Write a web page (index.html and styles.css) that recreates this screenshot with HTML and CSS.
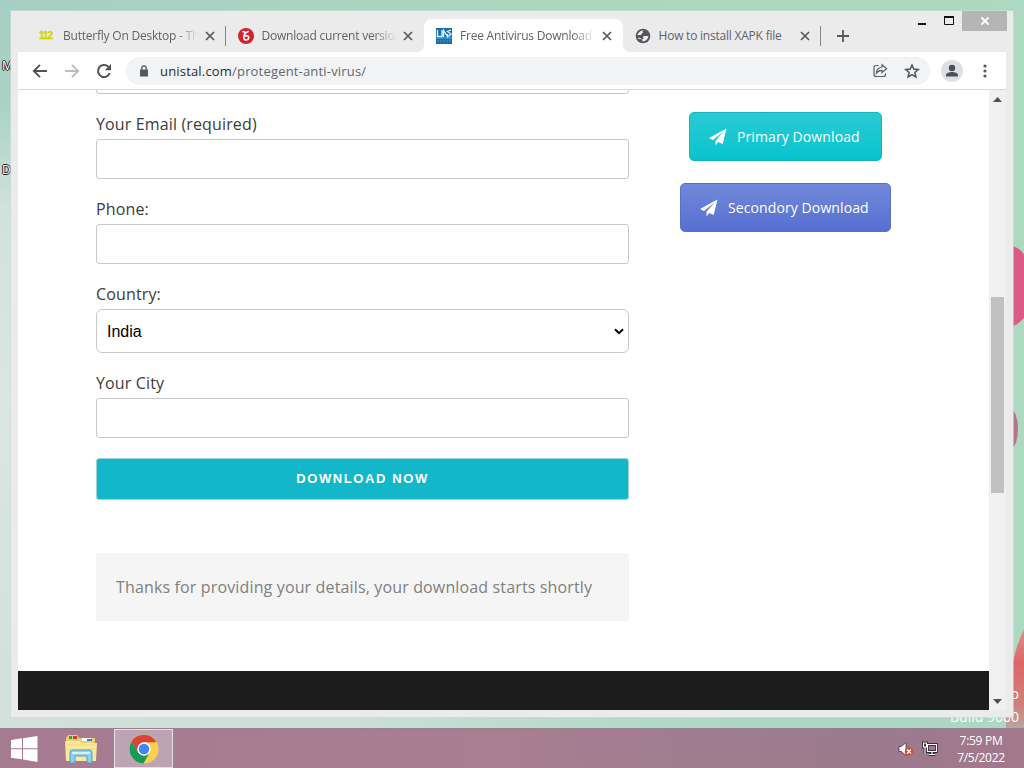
FILE: index.html
```html
<!DOCTYPE html>
<html lang="en">
<head>
  <meta charset="UTF-8" />
  <meta name="viewport" content="width=device-width, initial-scale=1.0"/>
  <title>Free Antivirus Download</title>
  <link rel="stylesheet" href="styles.css">
</head>
<body>
  <div class="desktop">
    <span class="petal petal-top"></span>
    <span class="petal petal-mid"></span>
    <span class="petal petal-bottom"></span>
    <span class="shortcut shortcut-m">M</span>
    <span class="shortcut shortcut-d">D</span>
    <span class="watermark watermark-name">Windows 8.1 Pro</span>
    <span class="watermark watermark-build">Build 9600</span>

    <div class="window">
      <div class="window-buttons">
        <svg class="win-min" width="10" height="16" viewBox="0 0 10 16"><path d="M1 13h8" stroke="#111" stroke-width="2"/></svg>
        <svg class="win-max" width="12" height="16" viewBox="0 0 12 16"><path d="M1.500 6.500h9v7h-9z" fill="none" stroke="#111"/><path d="M1 6h10" stroke="#111" stroke-width="2"/></svg>
        <div class="win-close">
          <svg width="10" height="10" viewBox="0 0 10 10"><path d="M1.500 1.500l7 7M8.500 1.500l-7 7" stroke="#fff" stroke-width="1.800"/></svg>
        </div>
      </div>

      <div class="tabs">
        <div class="tab">
          <span class="favicon favicon-112">112</span>
          <span class="tab-title fade">Butterfly On Desktop - Th</span>
          <svg class="tab-close" width="10" height="10" viewBox="0 0 10 10"><path d="M1 1l8 8M9 1l-8 8"/></svg>
        </div>
        <div class="tab">
          <svg class="favicon" width="16" height="16" viewBox="0 0 16 16"><circle cx="8" cy="8" r="8" fill="#d2232f"/><path d="M4.500 3.500c2 0 2.800.8 2.600 2.200M10.800 3.300C8 4 6 6.500 5.800 9.300c-.2 3.600 4.900 3.600 4.900.3 0-2.200-2.600-2.600-3.300-1" fill="none" stroke="#fff" stroke-width="1.600"/></svg>
          <span class="tab-title fade">Download current version</span>
          <svg class="tab-close" width="10" height="10" viewBox="0 0 10 10"><path d="M1 1l8 8M9 1l-8 8"/></svg>
        </div>
        <div class="tab active">
          <svg class="favicon" width="16" height="16" viewBox="0 0 16 16"><path d="M0 0h16v16H0z" fill="#1271ae"/><path d="M1.500 2v6.500H6V2M7.500 9V2.500l4 6V6M15 2l-3.500 1.500L15 6l-2.500 2.500" fill="none" stroke="#e4f4fc" stroke-width="1.300"/><path d="M0 10h16" stroke="#8fc4e2" stroke-width=".7"/><path d="M1 13h14" stroke="#4a95c5" stroke-dasharray="2 1"/></svg>
          <span class="tab-title fade">Free Antivirus Download</span>
          <svg class="tab-close" width="10" height="10" viewBox="0 0 10 10"><path d="M1 1l8 8M9 1l-8 8"/></svg>
        </div>
        <div class="tab">
          <svg class="favicon" width="16" height="16" viewBox="0 0 16 16"><circle cx="8" cy="8" r="7.300" fill="#54575b"/><path d="M9 2.200c-1.600.4-1.900 1.700-.8 2.400-1.700.4-1 2-2.400 2.300-1.200.3-2.200-.2-3.300.5C2.800 4.800 5.400 2.300 9 2.200zM2.600 10c1.400-.5 2.900-.2 3.600.8.600 1 1.800.5 2.500-.2-.9-.8-.9-2 .3-2.500 1.500-.5 2.500.2 4.400-.1-.4 3.200-2.700 5.400-5.700 5.400-.6-.7.200-1.400-.7-1.900-1.400-.7-3.100.1-4.400-1.500z" fill="#eceded"/></svg>
          <span class="tab-title">How to install XAPK file</span>
          <svg class="tab-close" width="10" height="10" viewBox="0 0 10 10"><path d="M1 1l8 8M9 1l-8 8"/></svg>
        </div>
        <svg class="new-tab" width="12" height="12" viewBox="0 0 12 12"><path d="M6 0v12M0 6h12" stroke="#54575b" stroke-width="1.800"/></svg>
      </div>

      <div class="toolbar">
        <svg class="nav" width="16" height="16" viewBox="0 0 16 16"><path d="M15 8H2M8 1.800L1.800 8 8 14.200" fill="none" stroke="#505356" stroke-width="1.900"/></svg>
        <svg class="nav" width="16" height="16" viewBox="0 0 16 16"><path d="M1 8h13M8 1.800L14.200 8 8 14.200" fill="none" stroke="#babcbe" stroke-width="1.900"/></svg>
        <svg class="nav" width="16" height="16" viewBox="0 0 16 16"><path d="M13.700 10A6 6 0 1 1 12.300 3.800" fill="none" stroke="#505356" stroke-width="2"/><path d="M15 1v6.200H8.800z" fill="#505356"/></svg>
        <div class="omnibox">
          <svg class="lock" width="10" height="12" viewBox="0 0 10 12"><path d="M1 4.500h8v7H1z" fill="#55585c"/><path d="M2.800 5V3a2.200 2.200 0 0 1 4.400 0v2" fill="none" stroke="#55585c" stroke-width="1.300"/></svg>
          <span class="url">unistal.com<span class="path">/protegent-anti-virus/</span></span>
          <svg class="share" width="16" height="16" viewBox="0 0 16 16"><path d="M6.500 2.500H4A2 2 0 0 0 2 4.500v7a2 2 0 0 0 2 2h7.500a2 2 0 0 0 2-2V10.500" fill="none" stroke="#5a5d61" stroke-width="1.200"/><path d="M10 1.800L14.700 5.800 10 9.500V7.300C7.500 7.200 5.800 8.200 4.500 10.200 4.700 6.800 6.500 4.400 10 4z" fill="none" stroke="#5a5d61" stroke-width="1.200"/></svg>
          <svg width="16" height="16" viewBox="0 0 16 16"><path d="M8 2l1.800 4.100 4.500.4-3.400 3 1 4.400L8 11.600l-3.900 2.300 1-4.400-3.400-3 4.500-.4z" fill="none" stroke="#505356" stroke-width="1.500"/></svg>
        </div>
        <svg class="avatar" width="22" height="22" viewBox="0 0 22 22"><circle cx="11" cy="11" r="11" fill="#dcdfe6"/><circle cx="11" cy="8" r="3.200" fill="#4b4f59"/><path d="M5 16.500v-1.500c0-2 3.500-3 6-3s6 1 6 3v1.500z" fill="#4b4f59"/></svg>
        <svg width="4" height="14" viewBox="0 0 4 14"><g fill="#54575b"><circle cx="2" cy="2" r="1.600"/><circle cx="2" cy="7" r="1.600"/><circle cx="2" cy="12" r="1.600"/></g></svg>
      </div>

      <div class="viewport">
        <div class="page">
          <div class="content">
            <form class="form">
              <input class="field" type="text">
              <label class="label">Your Email (required)</label>
              <input class="field" type="text">
              <label class="label">Phone:</label>
              <input class="field" type="text">
              <label class="label">Country:</label>
              <div class="field select">
                <span>India</span>
                <svg width="10" height="7" viewBox="0 0 10 7"><path d="M1 1.200l4 4 4-4" fill="none" stroke="#000" stroke-width="2"/></svg>
              </div>
              <label class="label">Your City</label>
              <input class="field" type="text">
              <button class="submit" type="button">DOWNLOAD NOW</button>
              <div class="thanks">Thanks for providing your details, your download starts shortly</div>
            </form>
            <div class="downloads">
              <a class="btn primary">
                <svg width="18" height="18" viewBox="0 0 18 18"><path d="M17.500.5L0 10l4 1.900L14.500 3.500 6.500 12.800v4.700l2.600-3.400 4.600 2z" fill="#fff"/></svg>
                <span>Primary Download</span>
              </a>
              <a class="btn secondary">
                <svg width="18" height="18" viewBox="0 0 18 18"><path d="M17.500.5L0 10l4 1.900L14.500 3.500 6.500 12.800v4.700l2.600-3.400 4.600 2z" fill="#fff"/></svg>
                <span>Secondory Download</span>
              </a>
            </div>
          </div>
          <div class="footer"></div>
        </div>
        <div class="scrollbar">
          <svg width="9" height="5" viewBox="0 0 9 5"><path d="M0 5l4.500-5L9 5z" fill="#505050"/></svg>
          <div class="thumb"></div>
          <svg class="down" width="9" height="5" viewBox="0 0 9 5"><path d="M0 0l4.500 5L9 0z" fill="#505050"/></svg>
        </div>
      </div>
    </div>

    <div class="taskbar">
      <svg class="start" width="28" height="26" viewBox="0 0 28 26"><path d="M1 4l11-1.700v10H1zM13 2.200L27.500 0v12.300H13zM1 13.300h11v10L1 21.700zM13 13.300h14.500V26L13 23.500z" fill="#fff"/></svg>
      <svg class="explorer" width="32" height="30" viewBox="0 0 32 30">
        <path d="M1 4l2-3h9l2 3h16v23H1z" fill="#e9cf73"/>
        <path d="M4 2h3v3H4zM21 4h3v3h-3z" fill="#3f9b47"/><path d="M8 2h4v3H8z" fill="#c6472e"/><path d="M17 4h9v3h-9z" fill="#fff"/><path d="M22 5h5v2h-5z" fill="#3784c4"/>
        <path d="M0 7h15l2 2h15l-1 18H1z" fill="#f9e89d"/>
        <path d="M2 11h28M2 15h28" stroke="#f1d779"/>
        <path d="M5 29V18q0-2 3-2h16q3 0 3 2v11h-5v-7H10v7z" fill="#91cdec" stroke="#4fa0cf"/>
        <path d="M7 19h18" stroke="#d3f0fb" stroke-width="2"/>
      </svg>
      <div class="task-active">
        <svg width="30" height="30" viewBox="0 0 30 30">
          <circle cx="15" cy="15" r="14.500" fill="#fcd04b"/>
          <path d="M2.440 7.750A14.500 14.500 0 0 1 27.560 8.300H15L9.200 18.350z" fill="#da4437"/>
          <path d="M2.440 7.750A14.500 14.500 0 0 0 14.500 29.500L20.800 18.350 15 21.700 9.200 18.350z" fill="#159a5a"/>
          <circle cx="15" cy="15" r="6.700" fill="#fff"/><circle cx="15" cy="15" r="5.300" fill="#4285f4"/>
        </svg>
      </div>
      <div class="tray">
        <svg width="16" height="16" viewBox="0 0 16 16"><path d="M1 5.500h2.500L8 1.500v13l-4.500-4H1z" fill="#fff" stroke="#4b3345" stroke-width=".8"/><circle cx="11" cy="10.500" r="4.200" fill="#d9472f"/><path d="M9 8.500l4 4M13 8.500l-4 4" stroke="#fff" stroke-width="1.400"/></svg>
        <svg class="network" width="16" height="16" viewBox="0 0 16 16"><g fill="none" stroke="#3d2e3b" stroke-width="3"><path d="M5.500 3.500h9v7h-9zM10 11v2.500M6.500 13.500h7M1.500 2h3v4h-3zM3 6v7"/></g><g fill="none" stroke="#fff" stroke-width="1.100"><path d="M5.500 3.500h9v7h-9zM10 11v2.500M6.500 13.500h7M1.500 2h3v4h-3zM3 6v7"/></g></svg>
        <div class="clock">
          <span>7:59 PM</span>
          <span>7/5/2022</span>
        </div>
      </div>
    </div>
  </div>
</body>
</html>
```

FILE: styles.css
```css
* {
  box-sizing: border-box;
}

body {
  margin: 0;
  font-family: 'Open Sans', 'Noto Sans', sans-serif;
}

svg {
  display: block;
  flex: none;
}

.desktop {
  position: relative;
  width: 1024px;
  height: 768px;
  overflow: hidden;
  display: flex;
  flex-direction: column;
  justify-content: flex-end;
  background:
    linear-gradient(to right, #d3e0da 0, #cbdfd6 350px, rgba(171, 216, 196, 0) 750px) 0 700px / 100% 68px no-repeat,
    linear-gradient(to bottom, #a6cfc3 0, #a9d1c4 100px, #d0e2dc 210px, #dce5e2 400px, #cfdfd8 100%) 0 0 / 12px 100% no-repeat,
    linear-gradient(to right, #a6cfc3, #aad7c0 50%, #add8c2);
}

/* wallpaper */
.petal {
  position: absolute;
  background: #dc5a88;
}

.petal-top {
  left: 980px;
  top: 245px;
  width: 54px;
  height: 82px;
  border-radius: 50%;
}

.petal-mid {
  left: 1004px;
  top: 410px;
  width: 14px;
  height: 38px;
  border-radius: 50%;
  background: #b6738e;
}

.petal-bottom {
  left: 1006px;
  top: 610px;
  width: 40px;
  height: 118px;
  border-radius: 100% 0 0 0;
  background: linear-gradient(#d8a7a0, #dc6767 45%, #cf7f7d 80%, #bda39d);
}

.shortcut {
  position: absolute;
  left: 2px;
  font-size: 12px;
  line-height: 16px;
  color: #fff;
  text-shadow: 1px 0 #222, -1px 0 #222, 0 1px #222, 0 -1px #222;
}

.shortcut-m {
  top: 58px;
}

.shortcut-d {
  top: 162px;
}

.watermark {
  position: absolute;
  right: 5px;
  font-size: 14px;
  line-height: 18px;
  color: #fff;
  white-space: nowrap;
}

.watermark-name {
  top: 685px;
}

.watermark-build {
  top: 708px;
}

/* browser window */
.window {
  position: absolute;
  left: 11px;
  top: 11px;
  width: 1002px;
  height: 706px;
  padding: 0 7px 7px;
  display: flex;
  flex-direction: column;
  background: #ebebeb;
  box-shadow: 0 0 0 1px rgba(205, 222, 215, 0.6);
}

.window-buttons {
  position: absolute;
  top: 0;
  right: 6px;
  display: flex;
}

.win-min {
  margin-right: 16px;
}

.win-max {
  margin-right: 7px;
}

.win-close {
  width: 45px;
  height: 20px;
  display: flex;
  align-items: center;
  justify-content: center;
  background: #b5b5b5;
}

.tabs {
  height: 41px;
  padding: 8px 0 0 9px;
  display: flex;
}

.tab {
  width: 198.5px;
  height: 33px;
  padding: 0 11px 0 12px;
  display: flex;
  align-items: center;
  border-radius: 8px 8px 0 0;
  position: relative;
}

.tab.active {
  background: #fff;
}

.tab.active::before,
.tab.active::after {
  content: "";
  position: absolute;
  bottom: 0;
  width: 8px;
  height: 8px;
}

.tab.active::before {
  left: -8px;
  background: radial-gradient(circle at 0 0, transparent 8px, #fff 8px);
}

.tab.active::after {
  right: -8px;
  background: radial-gradient(circle at 100% 0, transparent 8px, #fff 8px);
}

.tab:first-child::after,
.tab:nth-child(4)::after {
  content: "";
  position: absolute;
  right: 0;
  top: 7px;
  width: 1px;
  height: 20px;
  background: #85888b;
}

.favicon {
  width: 16px;
  flex: none;
  margin-right: 8px;
}

.favicon-112 {
  font: bold 10px 'Liberation Sans', sans-serif;
  letter-spacing: -1px;
  color: #cfd800;
  -webkit-text-stroke: 0.4px #cfd800;
}

.tab-title {
  flex: 1;
  overflow: hidden;
  white-space: nowrap;
  font-size: 12px;
  letter-spacing: -0.22px;
  color: #606367;
}

.fade {
  -webkit-mask-image: linear-gradient(to right, #000 82%, transparent 99%);
  mask-image: linear-gradient(to right, #000 82%, transparent 99%);
}

.tab-close {
  margin-left: 5px;
}

.tab-close path {
  stroke: #54575b;
  stroke-width: 1.7;
}

.new-tab {
  margin: 11px 0 0 16px;
}

.toolbar {
  height: 38px;
  padding: 0 19px 0 14px;
  display: flex;
  align-items: center;
  background: #fff;
  border-bottom: 1px solid #d8d9da;
}

.nav {
  margin-right: 16px;
}

.omnibox {
  flex: 1;
  height: 28px;
  margin: 0 11px 0 -2px;
  padding: 0 10px 0 13px;
  display: flex;
  align-items: center;
  border-radius: 14px;
  background: #f1f3f4;
}

.url {
  flex: 1;
  margin-left: 11px;
  font-size: 13px;
  letter-spacing: 0.18px;
  color: #2b2d30;
}

.path {
  color: #64676b;
}

.share {
  margin-right: 16px;
}

.avatar {
  margin-right: 20px;
}

/* web page */
.viewport {
  flex: 1;
  min-height: 0;
  display: flex;
}

.page {
  width: 971px;
  display: flex;
  flex-direction: column;
  overflow: hidden;
  background: #fff;
}

.content {
  height: 581px;
  padding-left: 78px;
  display: flex;
}

.form {
  width: 533px;
  margin-top: -36px;
  display: flex;
  flex-direction: column;
}

.label {
  height: 30px;
  margin-top: 15px;
  font-size: 16px;
  line-height: 30px;
  letter-spacing: 0.14px;
  color: #3c3c3c;
}

.field {
  width: 100%;
  height: 40px;
  flex: none;
  border: 1px solid #c6c8ca;
  border-radius: 3px;
  background: #fff;
}

.select {
  height: 44px;
  padding: 1px 4px 0 10px;
  display: flex;
  align-items: center;
  justify-content: space-between;
  border-radius: 6px;
  font: 16px 'Liberation Sans', Arial, sans-serif;
  color: #000;
}

.submit {
  height: 42px;
  margin-top: 20px;
  padding-bottom: 3px;
  flex: none;
  border: 1px solid #9fd3da;
  border-radius: 3px;
  background: #12b7c9;
  color: #fff;
  font: bold 13px 'Liberation Sans', Arial, sans-serif;
  letter-spacing: 1.6px;
}

.thanks {
  height: 68px;
  margin-top: 53px;
  padding-left: 20px;
  flex: none;
  line-height: 68px;
  letter-spacing: 0.145px;
  white-space: nowrap;
  background: #f5f5f5;
  color: #808080;
}

.downloads {
  width: 211px;
  margin: 22px 0 0 51px;
  display: flex;
  flex-direction: column;
  align-items: center;
  gap: 22px;
}

.btn {
  height: 49px;
  padding: 0 20px 0 19px;
  display: flex;
  align-items: center;
  gap: 10px;
  border-radius: 5px;
  font-size: 14px;
  letter-spacing: 0.1px;
  white-space: nowrap;
  color: #fff;
}

.primary {
  width: 193px;
  border: 1px solid #18b4bd;
  background: linear-gradient(#29cbd5, #08c3ce);
}

.secondary {
  width: 211px;
  border: 1px solid #5a70c0;
  background: linear-gradient(#7289d9, #566fd2);
}

.footer {
  flex: 1;
  background: #1c1c1c;
}

.scrollbar {
  width: 17px;
  padding: 7px 0 6px;
  display: flex;
  flex-direction: column;
  align-items: center;
  background: #f0f0f0;
}

.thumb {
  width: 13px;
  height: 196px;
  margin-top: 195px;
  background: #c0c0c0;
}

.down {
  margin-top: auto;
}

/* taskbar */
.taskbar {
  position: relative;
  height: 40px;
  padding-left: 10px;
  display: flex;
  align-items: center;
  background: linear-gradient(to right, #a67b92, #a77e92 50%, #9b7a8e 85%, #a3788b);
  border-top: 1px solid #97808f;
}

.explorer {
  margin: 0 17px 0 27px;
}

.task-active {
  width: 59px;
  height: 39px;
  display: flex;
  align-items: center;
  justify-content: center;
  border: 1px solid #eadfe7;
  background: #bda4b3;
}

.tray {
  margin-left: auto;
  display: flex;
  align-items: center;
}

.network {
  margin-left: 8px;
}

.clock {
  width: 86px;
  display: flex;
  flex-direction: column;
  align-items: center;
  font-size: 12px;
  line-height: 17px;
  letter-spacing: -0.3px;
  color: #fff;
}
```
